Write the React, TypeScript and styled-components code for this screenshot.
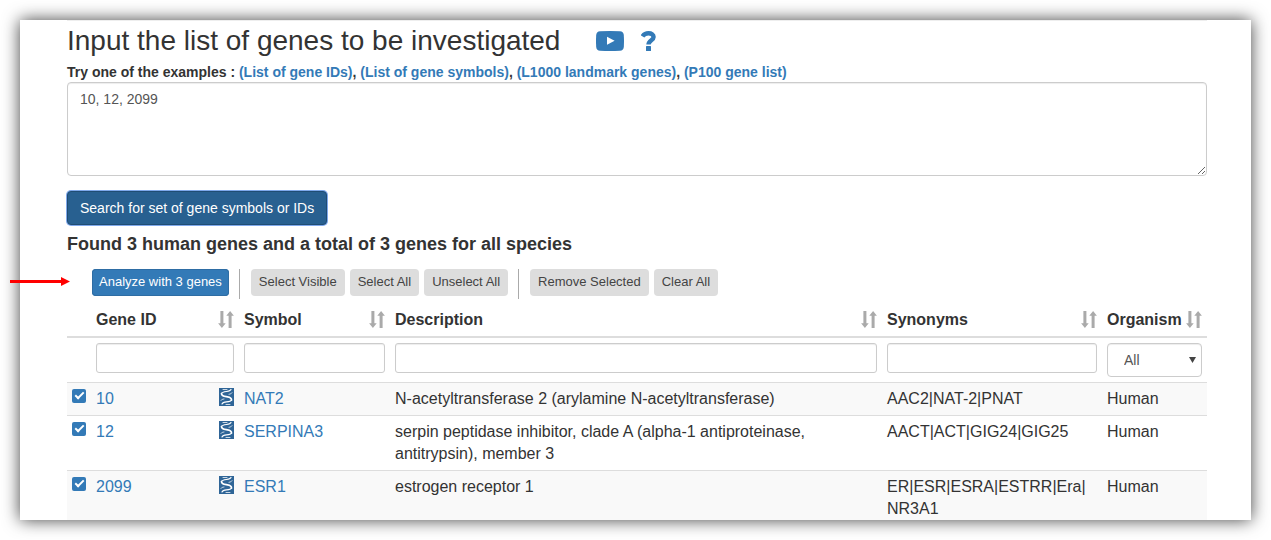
import React from "react";
import styled, { createGlobalStyle } from "styled-components";

const GlobalStyle = createGlobalStyle`
  *, *::before, *::after { box-sizing: border-box; }
  body {
    margin: 0;
    background: #fff;
    color: #333;
    font: 14px/20px "Liberation Sans", Arial, sans-serif;
  }
  button, input, select, textarea { font: inherit; margin: 0; }
`;

const Page = styled.div`
  height: 100vh;
  padding: 20px;
  overflow: hidden;
`;

const Card = styled.main`
  height: 100%;
  padding: 0 44px 0 47px;
  background: #fff;
  box-shadow: 0 0 16px rgba(0, 0, 0, 0.75);
`;

const Content = styled.div`
  height: 100%;
  overflow-x: visible;
  overflow-y: clip;
  border-top: 1px solid #eee;
`;

const TitleRow = styled.header`
  display: flex;
  align-items: center;
  padding-top: 4px;
`;

const Title = styled.h1`
  margin: 0 36px 0 0;
  font-size: 28px;
  line-height: 32px;
  font-weight: 400;
`;

const IconLink = styled.a`
  display: flex;
  margin-right: 17px;
  color: #337ab7;
`;

const Link = styled.a`
  color: #337ab7;
  text-decoration: none;
`;

const Examples = styled.p`
  margin: 5px 0 0;
  font-weight: 700;
`;

const GeneBox = styled.textarea`
  display: block;
  width: 100%;
  height: 94px;
  padding: 6px 12px;
  border: 1px solid #ccc;
  border-radius: 4px;
  background: #fff;
  color: #555;
  box-shadow: inset 0 1px 1px rgba(0, 0, 0, 0.075);
  resize: vertical;
`;

const SearchButton = styled.button`
  display: block;
  height: 34px;
  margin-top: 15px;
  padding: 0 12px;
  border: 1px solid #204d74;
  border-radius: 4px;
  background: #286090;
  color: #fff;
  box-shadow: 0 0 0 1px #7fa9ec;
`;

const Found = styled.h2`
  margin: 9px 0 0;
  font-size: 18px;
  line-height: 20px;
`;

const Toolbar = styled.div`
  position: relative;
  display: flex;
  gap: 5px;
  height: 30px;
  margin-top: 15px;
  padding-left: 25px;
`;

const ToolButton = styled.button<{ $primary?: boolean }>`
  height: 27px;
  padding: 0 ${(p) => (p.$primary ? 7 : 8)}px 2px;
  border: 0;
  border-radius: 4px;
  background: ${(p) => (p.$primary ? "#337ab7" : "#ddd")};
  color: ${(p) => (p.$primary ? "#fff" : "#444")};
  box-shadow: ${(p) => (p.$primary ? "inset 0 0 0 1px #2e6da4" : "none")};
  font-size: 13px;
  line-height: 20px;
  white-space: nowrap;
`;

const Divider = styled.span`
  width: 1px;
  margin: 0 6px 0 5px;
  background: #aaa;
`;

const Pointer = styled.svg`
  position: absolute;
  left: -57px;
  top: 7px;
`;

const Table = styled.table`
  width: 100%;
  margin-top: 5px;
  table-layout: fixed;
  border-collapse: separate;
  border-spacing: 0;
  font-size: 16px;
  line-height: 22px;
`;

const Col = styled.col<{ $w?: number }>`
  width: ${(p) => (p.$w ? `${p.$w}px` : "auto")};
`;

const HeadCell = styled.th`
  padding: 5px;
  border-bottom: 2px solid #ddd;
  text-align: left;
`;

const HeadLabel = styled.div`
  display: flex;
  justify-content: space-between;
  align-items: center;
`;

const FilterCell = styled.td`
  padding: 5px;
  vertical-align: top;
`;

const FilterInput = styled.input`
  display: block;
  width: 100%;
  height: 30px;
  padding: 5px 10px;
  border: 1px solid #ccc;
  border-radius: 3px;
  background: #fff;
  color: #555;
  box-shadow: inset 0 1px 1px rgba(0, 0, 0, 0.075);
`;

const SelectWrap = styled.div`
  position: relative;
`;

const FilterSelect = styled.select`
  appearance: none;
  display: block;
  width: 100%;
  height: 34px;
  padding: 0 16px;
  border: 1px solid #ccc;
  border-radius: 4px;
  background: #fff;
  color: #555;
  font-size: 14px;
  box-shadow: inset 0 1px 1px rgba(0, 0, 0, 0.075);
`;

const Caret = styled.svg`
  position: absolute;
  right: 6px;
  top: 14px;
  pointer-events: none;
`;

const Row = styled.tr`
  &:nth-child(odd) { background: #f9f9f9; }
`;

const Cell = styled.td`
  padding: 5px;
  border-top: 1px solid #ddd;
  vertical-align: top;
  overflow-wrap: break-word;
`;

const IdLine = styled.div`
  display: flex;
  justify-content: space-between;
  align-items: flex-start;
`;

const Check = styled.input`
  appearance: none;
  display: block;
  width: 14px;
  height: 14px;
  margin: 1px 0 0;
  border-radius: 2px;
  background: #337ab7;
  position: relative;

  &:checked::after {
    content: "";
    position: absolute;
    left: 5px;
    top: 1px;
    width: 5px;
    height: 9px;
    border: solid #fff;
    border-width: 0 2px 2px 0;
    transform: rotate(45deg);
  }
`;

const VideoIcon = () => (
  <svg width="28" height="20" viewBox="0 0 28 20" aria-hidden="true">
    <path fill="currentColor" d="M4 .2Q14-.2 24 .2Q27.400.5 27.8 4Q28.200 10 27.800 16Q27.400 19.500 24 19.800Q14 20.200 4 19.800Q.6 19.500.2 16Q-.2 10 .2 4Q.6.5 4 .2Z" />
    <path fill="#fff" d="M11 5.800L18.600 9.800L11 13.800Z" />
  </svg>
);

const HelpIcon = () => (
  <svg width="15" height="20" viewBox="0 0 15 20" aria-hidden="true">
    <path fill="none" stroke="currentColor" strokeWidth="4.400" d="M1.500 5.400C3 3.100 5 2.300 7.500 2.300C10.500 2.300 12.600 3.600 12.600 6C12.600 9.200 7.500 9.300 7.500 13.600" />
    <rect x="5" y="15" width="5" height="5" rx=".5" fill="currentColor" />
  </svg>
);

const SortIcon = () => (
  <svg width="16" height="18" viewBox="0 0 16 18" fill="#aaa" aria-hidden="true">
    <path d="M2.400 0H5.400V12.300H7.700L3.900 17L.1 12.300H2.400Z" />
    <path d="M10.600 17H13.600V4.700H15.900L12.100 0L8.300 4.700H10.600Z" />
  </svg>
);

const HelixIcon = () => (
  <svg width="15" height="18" viewBox="0 0 15 18" aria-hidden="true">
    <rect width="15" height="18" fill="#2f6597" />
    <g fill="none" stroke="#fff" strokeLinecap="round">
      <path strokeWidth="1.700" d="M2.500 5.500C2.500 8.500 6 8.400 8.500 8.800C11.500 9.300 12.500 10 12.500 12" />
      <path strokeWidth="1.200" d="M2.500 5.500C3 4.200 5 3.800 7.500 3.500C10 3.200 11.500 2.500 12 1.500M12.500 12C12 13.300 10 13.600 7.500 13.800C5 14 3.500 14.800 3 16" />
      <path strokeWidth="1" opacity=".75" d="M4 1.500H8M10 6.300C11.500 6 12.500 5.500 13 4.800M2 12.300C2.500 11.600 3.500 11.200 5 11M7 16.500H11" />
    </g>
  </svg>
);

const columns = ["Gene ID", "Symbol", "Description", "Synonyms", "Organism"];

const genes = [
  { id: "10", symbol: "NAT2", description: "N-acetyltransferase 2 (arylamine N-acetyltransferase)", synonyms: ["AAC2", "NAT-2", "PNAT"] },
  { id: "12", symbol: "SERPINA3", description: "serpin peptidase inhibitor, clade A (alpha-1 antiproteinase, antitrypsin), member 3", synonyms: ["AACT", "ACT", "GIG24", "GIG25"] },
  { id: "2099", symbol: "ESR1", description: "estrogen receptor 1", synonyms: ["ER", "ESR", "ESRA", "ESTRR", "Era", "NR3A1"] },
];

const examples = ["(List of gene IDs)", "(List of gene symbols)", "(L1000 landmark genes)", "(P100 gene list)"];

export default function App() {
  return (
    <Page>
      <GlobalStyle />
      <Card>
        <Content>
          <TitleRow>
            <Title>Input the list of genes to be investigated</Title>
            <IconLink href="#video" aria-label="Video"><VideoIcon /></IconLink>
            <IconLink href="#help" aria-label="Help"><HelpIcon /></IconLink>
          </TitleRow>
          <Examples>
            Try one of the examples :{" "}
            {examples.map((label, i) => (
              <React.Fragment key={label}>
                {i > 0 && ", "}
                <Link href="#example">{label}</Link>
              </React.Fragment>
            ))}
          </Examples>
          <GeneBox aria-label="Genes" defaultValue="10, 12, 2099" />
          <SearchButton type="button">Search for set of gene symbols or IDs</SearchButton>
          <Found>Found 3 human genes and a total of 3 genes for all species</Found>
          <Toolbar>
            <Pointer width="61" height="11" viewBox="0 0 61 11" aria-hidden="true">
              <path fill="red" d="M0 4H51V1L60 5.500L51 10V7H0Z" />
            </Pointer>
            <ToolButton type="button" $primary>Analyze with 3 genes</ToolButton>
            <Divider />
            <ToolButton type="button">Select Visible</ToolButton>
            <ToolButton type="button">Select All</ToolButton>
            <ToolButton type="button">Unselect All</ToolButton>
            <Divider />
            <ToolButton type="button">Remove Selected</ToolButton>
            <ToolButton type="button">Clear All</ToolButton>
          </Toolbar>
          <Table>
            <colgroup>
              <Col $w={24} />
              <Col $w={148} />
              <Col $w={151} />
              <Col />
              <Col $w={220} />
              <Col $w={105} />
            </colgroup>
            <thead>
              <tr>
                <HeadCell />
                {columns.map((name) => (
                  <HeadCell key={name} scope="col">
                    <HeadLabel>{name}<SortIcon /></HeadLabel>
                  </HeadCell>
                ))}
              </tr>
              <tr>
                <FilterCell />
                {columns.slice(0, 4).map((name) => (
                  <FilterCell key={name}><FilterInput type="text" aria-label={name} /></FilterCell>
                ))}
                <FilterCell>
                  <SelectWrap>
                    <FilterSelect aria-label="Organism">
                      <option>All</option>
                    </FilterSelect>
                    <Caret width="7" height="6" viewBox="0 0 7 6" aria-hidden="true">
                      <path fill="#444" d="M0 0H7L3.500 6Z" />
                    </Caret>
                  </SelectWrap>
                </FilterCell>
              </tr>
            </thead>
            <tbody>
              {genes.map((g) => (
                <Row key={g.id}>
                  <Cell><Check type="checkbox" defaultChecked aria-label={`Select ${g.symbol}`} /></Cell>
                  <Cell><IdLine><Link href="#gene">{g.id}</Link><HelixIcon /></IdLine></Cell>
                  <Cell><Link href="#gene">{g.symbol}</Link></Cell>
                  <Cell>{g.description}</Cell>
                  <Cell>
                    {g.synonyms.map((s, i) => (
                      <React.Fragment key={s}>{i > 0 && <>|<wbr /></>}{s}</React.Fragment>
                    ))}
                  </Cell>
                  <Cell>Human</Cell>
                </Row>
              ))}
            </tbody>
          </Table>
        </Content>
      </Card>
    </Page>
  );
}
